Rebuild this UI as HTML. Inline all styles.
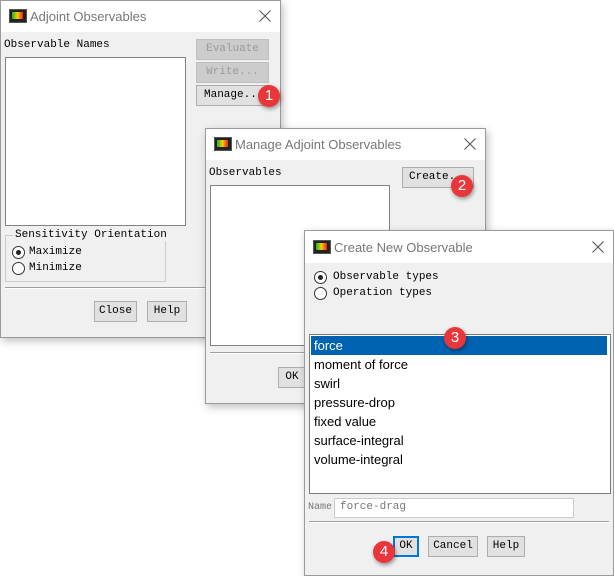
<!DOCTYPE html>
<html><head><meta charset="utf-8"><style>
body{margin:0;width:614px;height:575px;background:#fff;position:relative;overflow:hidden;font-family:"Liberation Mono",monospace;font-size:11px;color:#000}
.win{position:absolute;background:#f0f0f0;border:1px solid #9a9a9a;box-shadow:2px 3px 8px rgba(0,0,0,.25)}
.tb{position:absolute;left:0;right:0;top:0;background:#fff}
.tt{position:absolute;font-family:"Liberation Sans",sans-serif;font-size:13px;color:#777}
.x{position:absolute;width:12px;height:12px}
.ico{position:absolute;width:16px;height:12px;background:#222;border:1px solid #555}
.ico:after{content:"";position:absolute;left:2px;top:2px;width:11px;height:7px;background:linear-gradient(90deg,#1b2 0,#fc0 50%,#e22 100%)}
.a{position:absolute;white-space:nowrap}
.lb{position:absolute;background:#fff;border:1px solid #828282}
.btn{position:absolute;background:#e1e1e1;border:1px solid #adadad;text-align:center;box-sizing:border-box}
.dis{color:#9a9a9a;background:#ccc;border-color:#bfbfbf}
.sep{position:absolute;height:1px;background:#a0a0a0;border-bottom:1px solid #fff}
.rad{position:absolute;width:11px;height:11px;border:1px solid #333;border-radius:50%;background:#fff}
.rad.on:after{content:"";position:absolute;left:3px;top:3px;width:5px;height:5px;border-radius:50%;background:#222}
.badge{position:absolute;width:22px;height:22px;border-radius:50%;background:#e8363a;color:#fff;font-family:"Liberation Sans",sans-serif;font-size:15px;text-align:center;line-height:22px;box-shadow:1px 2px 4px rgba(0,0,0,.4)}
.it{position:absolute;left:4px;font-family:"Liberation Sans",sans-serif;font-size:13px}
</style></head><body>

<div class="win" style="left:0;top:0;width:279px;height:336px">
 <div class="tb" style="height:31px"></div>
 <div class="ico" style="left:8px;top:8px"></div>
 <div class="tt" style="left:29px;top:8px">Adjoint Observables</div>
 <svg class="x" style="left:258px;top:9px" viewBox="0 0 12 12"><path d="M0.5 0.5L11.5 11.5M11.5 0.5L0.5 11.5" stroke="#555" stroke-width="1.1"/></svg>
 <div class="a" style="left:3px;top:38px">Observable Names</div>
 <div class="lb" style="left:4px;top:56px;width:179px;height:167px"></div>
 <div class="btn dis" style="left:195px;top:38px;width:73px;height:21px;line-height:19px">Evaluate</div>
 <div class="btn dis" style="left:195px;top:61px;width:73px;height:21px;line-height:19px">Write...</div>
 <div class="btn" style="left:195px;top:84px;width:73px;height:21px;line-height:19px;text-align:left;padding-left:7px">Manage...</div>
 <div style="position:absolute;left:4px;top:234px;width:159px;height:45px;border:1px solid #ccc"></div>
 <div class="a" style="left:12px;top:228px;background:#f0f0f0;padding:0 2px">Sensitivity Orientation</div>
 <div class="rad on" style="left:11px;top:245px"></div><div class="a" style="left:28px;top:245px">Maximize</div>
 <div class="rad" style="left:11px;top:261px"></div><div class="a" style="left:28px;top:261px">Minimize</div>
 <div class="sep" style="left:4px;width:272px;top:286px"></div>
 <div class="btn" style="left:93px;top:300px;width:43px;height:21px;line-height:19px">Close</div>
 <div class="btn" style="left:146px;top:300px;width:40px;height:21px;line-height:19px">Help</div>
</div>

<div class="win" style="left:205px;top:128px;width:279px;height:274px">
 <div class="tb" style="height:31px"></div>
 <div class="ico" style="left:8px;top:8px"></div>
 <div class="tt" style="left:29px;top:8px">Manage Adjoint Observables</div>
 <svg class="x" style="left:258px;top:9px" viewBox="0 0 12 12"><path d="M0.5 0.5L11.5 11.5M11.5 0.5L0.5 11.5" stroke="#555" stroke-width="1.1"/></svg>
 <div class="a" style="left:3px;top:38px">Observables</div>
 <div class="lb" style="left:4px;top:56px;width:178px;height:159px"></div>
 <div class="btn" style="left:196px;top:38px;width:72px;height:21px;line-height:19px;text-align:left;padding-left:6px">Create...</div>
 <div class="sep" style="left:4px;width:272px;top:223px"></div>
 <div class="btn" style="left:72px;top:238px;width:28px;height:21px;line-height:19px">OK</div>
</div>

<div class="win" style="left:304px;top:230px;width:308px;height:344px">
 <div class="tb" style="height:32px"></div>
 <div class="ico" style="left:8px;top:9px"></div>
 <div class="tt" style="left:29px;top:9px">Create New Observable</div>
 <svg class="x" style="left:287px;top:10px" viewBox="0 0 12 12"><path d="M0.5 0.5L11.5 11.5M11.5 0.5L0.5 11.5" stroke="#555" stroke-width="1.1"/></svg>
 <div class="rad on" style="left:9px;top:40px"></div><div class="a" style="left:28px;top:40px">Observable types</div>
 <div class="rad" style="left:9px;top:56px"></div><div class="a" style="left:28px;top:56px">Operation types</div>
 <div class="lb" style="left:4px;top:103px;width:300px;height:158px;border-color:#7a7a7a">
  <div style="position:absolute;left:1px;top:1px;width:296px;height:19px;background:#0063b1"></div>
  <div class="it" style="top:3px;color:#fff">force</div>
  <div class="it" style="top:22px">moment of force</div>
  <div class="it" style="top:41px">swirl</div>
  <div class="it" style="top:60px">pressure-drop</div>
  <div class="it" style="top:79px">fixed value</div>
  <div class="it" style="top:98px">surface-integral</div>
  <div class="it" style="top:117px">volume-integral</div>
 </div>
 <div class="a" style="left:3px;top:271px;color:#777;font-size:10px">Name</div>
 <div style="position:absolute;left:29px;top:267px;width:238px;height:18px;background:#fff;border:1px solid #ccc"></div>
 <div class="a" style="left:35px;top:270px;color:#777">force-drag</div>
 <div class="sep" style="left:4px;width:300px;top:290px"></div>
 <div class="btn" style="left:88px;top:305px;width:26px;height:21px;line-height:17px;border:2px solid #0078d7">OK</div>
 <div class="btn" style="left:123px;top:305px;width:50px;height:21px;line-height:19px">Cancel</div>
 <div class="btn" style="left:182px;top:305px;width:38px;height:21px;line-height:19px">Help</div>
</div>

<div class="badge" style="left:258px;top:85px">1</div>
<div class="badge" style="left:451px;top:175px">2</div>
<div class="badge" style="left:444px;top:327px">3</div>
<div class="badge" style="left:373px;top:541px">4</div>
</body></html>
